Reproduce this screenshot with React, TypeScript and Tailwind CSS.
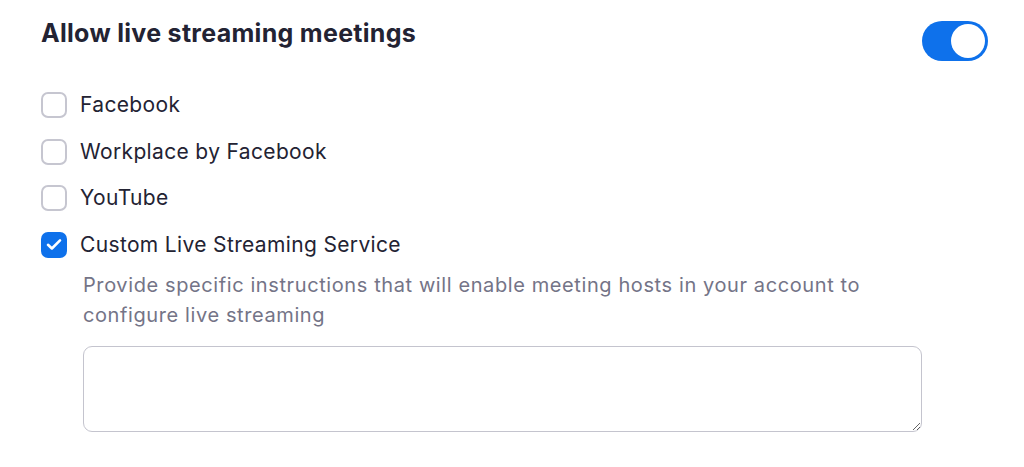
import { useState } from "react";

const options = [
  { id: "facebook", label: "Facebook" },
  { id: "workplace", label: "Workplace by Facebook" },
  { id: "youtube", label: "YouTube" },
  { id: "custom", label: "Custom Live Streaming Service" },
];

const CheckIcon = () => (
  <svg width="16" height="13" viewBox="0 0 16 13" fill="none">
    <path
      d="M2 6.8 5.9 10.5 14 2.4"
      stroke="white"
      strokeWidth="2.6"
      strokeLinecap="round"
      strokeLinejoin="round"
    />
  </svg>
);

const App = () => {
  const [enabled, setEnabled] = useState(true);
  const [checked, setChecked] = useState<Record<string, boolean>>({
    custom: true,
  });

  return (
    <div className="w-[1024px] h-[467px] bg-white pl-[41px] pr-[36px] pt-[17px] font-['Inter',sans-serif] text-[#232333] overflow-hidden">
      <div className="flex flex-row items-start justify-between">
        <h2 className="m-0 text-[25px] leading-[32px] font-bold tracking-[0.3px]">
          Allow live streaming meetings
        </h2>
        <button
          className="mt-[4px] w-[66px] h-[40px] rounded-full bg-[#0e71eb] p-[3px] flex flex-row justify-end items-center cursor-pointer"
          onClick={() => setEnabled(!enabled)}
        >
          <span className="block w-[34px] h-[34px] rounded-full bg-white" />
        </button>
      </div>
      <div className="mt-[31px] flex flex-col gap-[20.5px]">
        {options.map((o) => {
          const on = !!checked[o.id];
          return (
            <label
              key={o.id}
              className="h-[26px] flex flex-row items-center gap-[13px] cursor-pointer"
              onClick={() => setChecked({ ...checked, [o.id]: !on })}
            >
              <span
                className={
                  on
                    ? "w-[26px] h-[26px] rounded-[7px] bg-[#0e71eb] flex items-center justify-center"
                    : "w-[26px] h-[26px] rounded-[7px] border-2 border-[#c6c6d0] bg-white"
                }
              >
                {on && <CheckIcon />}
              </span>
              <span className="text-[21px] leading-[26px] tracking-[0.35px]">
                {o.label}
              </span>
            </label>
          );
        })}
      </div>
      <div className="pl-[42px] mt-[12px]">
        <p className="m-0 w-[800px] text-[20px] leading-[30px] text-[#747487] tracking-[0.6px]">
          Provide specific instructions that will enable meeting hosts in your
          account to configure live streaming
        </p>
        <textarea className="mt-[16px] block w-[839px] h-[86px] rounded-[9px] border border-[#c4c4ce] outline-none resize-y" />
      </div>
    </div>
  );
};

export default App;
